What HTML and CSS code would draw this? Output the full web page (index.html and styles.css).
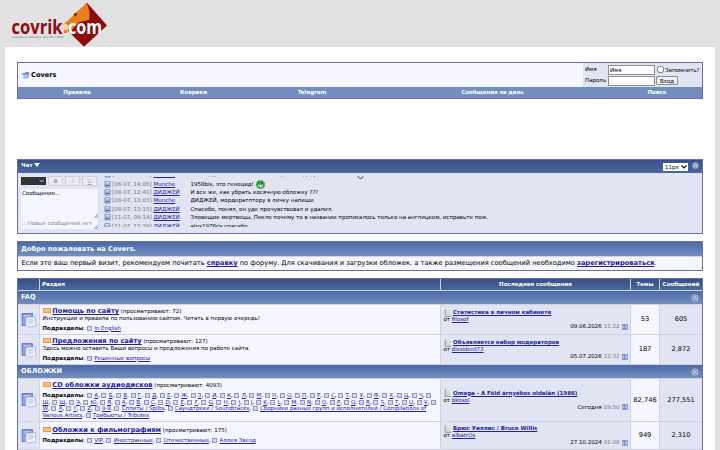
FILE: index.html
```
<!DOCTYPE html>
<html lang="ru">
  <head>
    <meta charset="UTF-8" />
    <title>Covers</title>
    <link rel="stylesheet" href="styles.css">
  </head>
  <body>
    <svg class="defs" width="0" height="0">
      <symbol id="forum" viewBox="0 0 16 16">
        <path d="M1 1.5h10.5v12H1z" fill="#7f93cc" stroke="#5f74b4" stroke-width=".8"/>
        <path d="M2.3 3.4h7.5M2.3 5h7" stroke="#cdd8f4" stroke-width=".8"/>
        <path d="M4.5 5.5l9.5-1 1 9.5-8 1.2-2.5-2z" fill="#eef2fc" stroke="#8c9ccc" stroke-width=".6"/>
        <path d="M7 7.5l5-.5M7 9.3l5.5-.5M7 11.2l5-.5" stroke="#9aa9d0" stroke-width=".6"/>
        <path d="M1.500 6.500h4l-.5 6.500H1.500z" fill="#93a6dc"/>
      </symbol>
      <symbol id="post" viewBox="0 0 8 8">
        <path d="M1.2.5v6.8h6" fill="none" stroke="#777b80" stroke-width=".8"/>
        <path d="M2.6 1.8h2M2.6 3.2h2.8M2.6 4.6h2.4M3 6h4" stroke="#b9c2ac" stroke-width=".6"/>
      </symbol>
      <symbol id="go" viewBox="0 0 6 6">
        <rect x=".3" y=".3" width="5.4" height="5.4" fill="#b9c9ea" stroke="#7088bd" stroke-width=".6"/>
        <path d="M1.2 1.4h2.4L2.5 3l1.3 1.7H1.4" fill="none" stroke="#4664a6" stroke-width=".7"/>
      </symbol>
      <symbol id="collapse" viewBox="0 0 8 8">
        <circle cx="4" cy="4" r="3.3" fill="#7790c2" stroke="#c6d3ea" stroke-width=".7"/>
        <path d="M2.3 4L4 2.5 5.7 4M2.3 5.7L4 4.2l1.7 1.5" fill="none" stroke="#fff" stroke-width=".7"/>
      </symbol>
      <symbol id="msg" viewBox="0 0 7 7">
        <rect x=".8" y=".4" width="5.4" height="5.8" rx=".6" fill="#a8b9de" stroke="#6a80b5" stroke-width=".6"/>
        <path d="M1.4 4.4h4.2" stroke="#4c649f" stroke-width="1"/>
        <path d="M1.8 1.8h3.4" stroke="#eef2fc" stroke-width=".9"/>
      </symbol>
    </svg>

    <header class="logo">
      <svg width="120" height="47" viewBox="0 0 120 47">
        <path d="M87 2.8L107 25.5 84 46.8 63 26z" fill="#8e0b0d"/>
        <path d="M86.500 3.200L63 25l8 6 8-9 10-2q2-9-2.500-16.800z" fill="#e8811d"/>
        <path d="M73.500 14l3-1.500.500 2.500-2 1.500z" fill="#8e0b0d"/>
        <circle cx="65" cy="27.500" r="3.500" fill="#f6d3b0"/>
        <circle cx="65.500" cy="31.500" r="1.800" fill="#e8811d"/>
        <text x="11.500" y="34" class="logo-name" textLength="51" lengthAdjust="spacingAndGlyphs">covrik</text>
        <text x="68" y="34" class="logo-name light" textLength="34" lengthAdjust="spacingAndGlyphs">com</text>
        <text x="12" y="38.300" class="logo-sub" textLength="51">миллионы обложек для CD и DVD</text>
      </svg>
    </header>

    <main class="page">
      <section class="tborder top">
        <div class="navbar">
          <div class="crumb">
            <svg width="9" height="8" viewBox="0 0 9 8"><path d="M.5 2h3l1-1h3.500v5.500h-6z" fill="#6f8ad8"/><path d="M1.500 3.500H9L7.500 7.500H2z" fill="#a9bdf2"/><path d="M.5 1.500l2 5" stroke="#e3eafc"/></svg>
            <b>Covers</b>
          </div>
          <form class="login">
            <label>Имя</label><input class="field" type="text" value="Имя"><span class="remember"><input type="checkbox">Запомнить?</span>
            <label>Пароль</label><input class="field" type="password"><button class="enter" type="button">Вход</button>
          </form>
        </div>
        <nav class="menu">
          <a>Правила</a><a>Коврики</a><a>Telegram</a><a>Сообщения за день</a><a>Поиск</a>
        </nav>
      </section>

      <section class="tborder chat">
        <div class="thead chat-head">
          <span>Чат <i class="down"></i></span>
          <div class="tools">
            <span class="size">11px <svg width="6" height="4" viewBox="0 0 6 4"><path d="M.5.5l2.500 2.500L5.500.5" fill="none" stroke="#111" stroke-width="1.200"/></svg></span>
            <svg width="7" height="7"><use href="#collapse"/></svg>
          </div>
        </div>
        <div class="chat-body">
          <div class="editor">
            <div class="buttons">
              <span class="color"><svg width="5" height="4" viewBox="0 0 5 4"><path d="M.5.8l2 2 2-2" fill="none" stroke="#ddd"/></svg></span>
              <span class="btn"><b>B</b></span><span class="btn"><i>I</i></span><span class="btn"><u>U</u></span>
            </div>
            <div class="message">Сообщение...<i class="grip"></i></div>
            <div class="status">:: Новых сообщений нет<i class="grip"></i></div>
          </div>
          <div class="log">
            <div class="line tall"><svg width="7" height="7"><use href="#msg"/></svg><span class="when">[06-07, 13:58]</span><a>Munche</a><p>Пекло, для чего всё это было здесь надо, расскажи мне <i class="smile"></i></p></div>
            <div class="line"><svg width="7" height="7"><use href="#msg"/></svg><span class="when">[06-07, 14:06]</span><a>Munche</a><p>1958bis, это геноцид! <svg class="grin" width="9" height="9" viewBox="0 0 9 9"><circle cx="4.500" cy="4.500" r="4.100" fill="#3fb54d" stroke="#207a2c" stroke-width=".5"/><circle cx="3" cy="2.900" r=".7"/><circle cx="6" cy="2.900" r=".7"/><path d="M2 4.400h5v2q-2.500 2-5 0z" fill="#fff" stroke="#176022" stroke-width=".4"/><path d="M3.600 4.500v2.500M5.300 4.500v2.500" stroke="#176022" stroke-width=".4"/></svg></p></div>
            <div class="line"><svg width="7" height="7"><use href="#msg"/></svg><span class="when">[08-07, 12:41]</span><a>ДИДЖЕЙ</a><p>И все же, как убрать косячную обложку ???</p></div>
            <div class="line"><svg width="7" height="7"><use href="#msg"/></svg><span class="when">[08-07, 13:03]</span><a>Munche</a><p>ДИДЖЕЙ, мордератптору в личку напиши</p></div>
            <div class="line"><svg width="7" height="7"><use href="#msg"/></svg><span class="when">[08-07, 13:15]</span><a>ДИДЖЕЙ</a><p>Спасибо, понял, он уде прочувствовал и удалил.</p></div>
            <div class="line"><svg width="7" height="7"><use href="#msg"/></svg><span class="when">[11-07, 09:14]</span><a>ДИДЖЕЙ</a><p>Зловещие мертвецы, Пекло почему то в названии прописалось только на англицком, исправьте пож.</p></div>
            <div class="line"><svg width="7" height="7"><use href="#msg"/></svg><span class="when">[11-07, 15:39]</span><a>ДИДЖЕЙ</a><p>alex1976ris спасибо</p></div>
          </div>
        </div>
      </section>

      <section class="tborder welcome">
        <div class="tcat">Добро пожаловать на Covers.</div>
        <p>Если это ваш первый визит, рекомендуем почитать <a><b>справку</b></a> по форуму. Для скачивания и загрузки обложек, а также размещения сообщений необходимо <a><b>зарегистрироваться</b></a>.</p>
      </section>

      <section class="tborder forums">
        <div class="row head">
          <div class="thead"></div><div class="thead left">Раздел</div><div class="thead">Последнее сообщение</div><div class="thead">Темы</div><div class="thead">Сообщений</div>
        </div>

        <div class="tcat">FAQ <svg width="8" height="8"><use href="#collapse"/></svg></div>
        <div class="row faq">
          <div class="alt2 icon"><svg width="16" height="16"><use href="#forum"/></svg></div>
          <div class="alt1 forum">
            <div class="title"><i class="flag"></i> <a>Помощь по сайту</a> <span>(просматривают: 72)</span></div>
            <div class="desc">Инструкции и правила по пользованию сайтом. Читать в первую очередь!</div>
            <div class="subs"><b>Подразделы</b>: <i class="sub"></i> <a>In English</a></div>
          </div>
          <div class="alt2 last">
            <div class="topic"><svg width="8" height="8"><use href="#post"/></svg><a>Статистика в личном кабинете</a></div>
            <div>от <a>filosof</a></div>
            <div class="date">09.06.2026 <span>11:22</span> <svg width="6" height="6"><use href="#go"/></svg></div>
          </div>
          <div class="alt1 num">53</div>
          <div class="alt2 num">605</div>
        </div>
        <div class="row faq">
          <div class="alt2 icon"><svg width="16" height="16"><use href="#forum"/></svg></div>
          <div class="alt1 forum">
            <div class="title"><i class="flag"></i> <a>Предложения по сайту</a> <span>(просматривают: 127)</span></div>
            <div class="desc">Здесь можно оставить Ваши вопросы и предложения по работе сайта.</div>
            <div class="subs"><b>Подразделы</b>: <i class="sub"></i> <a>Решенные вопросы</a></div>
          </div>
          <div class="alt2 last">
            <div class="topic"><svg width="8" height="8"><use href="#post"/></svg><a>Объявляется набор модераторов</a></div>
            <div>от <a>dissident73</a></div>
            <div class="date">05.07.2026 <span>12:32</span> <svg width="6" height="6"><use href="#go"/></svg></div>
          </div>
          <div class="alt1 num">187</div>
          <div class="alt2 num">2,872</div>
        </div>

        <div class="tcat">ОБЛОЖКИ <svg width="8" height="8"><use href="#collapse"/></svg></div>
        <div class="row audio">
          <div class="alt2 icon"><svg width="16" height="16"><use href="#forum"/></svg></div>
          <div class="alt1 forum">
            <div class="title"><i class="flag"></i> <a>CD обложки аудиодисков</a> <span>(просматривают: 4093)</span></div>
            <div class="subs">
              <b>Подразделы</b>: <i class="sub"></i> <a>А</a>, <i class="sub"></i> <a>Б</a>, <i class="sub"></i> <a>В</a>, <i class="sub"></i> <a>Г</a>, <i class="sub"></i> <a>Д</a>, <i class="sub"></i> <a>Е</a>, <i class="sub"></i> <a>Ж</a>, <i class="sub"></i> <a>З</a>, <i class="sub"></i> <a>И</a>, <i class="sub"></i> <a>К</a>, <i class="sub"></i> <a>Л</a>, <i class="sub"></i> <a>М</a>, <i class="sub"></i> <a>Н</a>, <i class="sub"></i> <a>О</a>, <i class="sub"></i> <a>П</a>, <i class="sub"></i> <a>Р</a>, <i class="sub"></i> <a>С</a>, <i class="sub"></i> <a>Т</a>, <i class="sub"></i> <a>У</a>, <i class="sub"></i> <a>Ф</a>, <i class="sub"></i> <a>Х</a>, <i class="sub"></i> <a>Ц</a>, <i class="sub"></i> <a>Ч</a>, <i class="sub"></i><br>
              <a>Ш</a>, <i class="sub"></i> <a>Щ</a>, <i class="sub"></i> <a>Э</a>, <i class="sub"></i> <a>Ю</a>, <i class="sub"></i> <a>Я</a>, <i class="sub"></i> <a>A</a>, <i class="sub"></i> <a>B</a>, <i class="sub"></i> <a>C</a>, <i class="sub"></i> <a>D</a>, <i class="sub"></i> <a>E</a>, <i class="sub"></i> <a>F</a>, <i class="sub"></i> <a>G</a>, <i class="sub"></i> <a>H</a>, <i class="sub"></i> <a>I</a>, <i class="sub"></i> <a>J</a>, <i class="sub"></i> <a>K</a>, <i class="sub"></i> <a>L</a>, <i class="sub"></i> <a>M</a>, <i class="sub"></i> <a>N</a>, <i class="sub"></i> <a>O</a>, <i class="sub"></i> <a>P</a>, <i class="sub"></i> <a>Q</a>, <i class="sub"></i> <a>R</a>, <i class="sub"></i> <a>S</a>, <i class="sub"></i> <a>T</a>, <i class="sub"></i> <a>U</a>, <i class="sub"></i> <a>V</a>, <i class="sub"></i><br>
              <a>W</a>, <i class="sub"></i> <a>X</a>, <i class="sub"></i> <a>Y</a>, <i class="sub"></i> <a>Z</a>, <i class="sub"></i> <a>0-9</a>, <i class="sub"></i> <a>Сплиты / Splits</a>, <i class="sub"></i> <a>Саундтреки / Soundtracks</a>, <i class="sub"></i> <a>Сборники разных групп и исполнителей / Compilations of<br>
              Various Artists</a>, <i class="sub"></i> <a>Трибьюты / Tributes</a>
            </div>
          </div>
          <div class="alt2 last">
            <div class="topic"><svg width="8" height="8"><use href="#post"/></svg><a>Omega - A Föld árnyékos oldalán (1986)</a></div>
            <div>от <a>bkosol</a></div>
            <div class="date">Сегодня <span>09:50</span> <svg width="6" height="6"><use href="#go"/></svg></div>
          </div>
          <div class="alt1 num">82,746</div>
          <div class="alt2 num">277,551</div>
        </div>
        <div class="row films">
          <div class="alt2 icon"><svg width="16" height="16"><use href="#forum"/></svg></div>
          <div class="alt1 forum">
            <div class="title"><i class="flag"></i> <a>Обложки к фильмографиям</a> <span>(просматривают: 175)</span></div>
            <div class="subs"><b>Подразделы</b>: <i class="sub"></i> <a>VIP</a>, <i class="sub"></i> <a>Иностранные</a>, <i class="sub"></i> <a>Отечественные</a>, <i class="sub"></i> <a>Аллея Звезд</a></div>
          </div>
          <div class="alt2 last">
            <div class="topic"><svg width="8" height="8"><use href="#post"/></svg><a>Брюс Уиллис / Bruce Willis</a></div>
            <div>от <a>albatrOs</a></div>
            <div class="date">27.10.2024 <span>01:08</span> <svg width="6" height="6"><use href="#go"/></svg></div>
          </div>
          <div class="alt1 num">949</div>
          <div class="alt2 num">2,310</div>
        </div>
        <div class="row">
          <div class="alt2 icon"></div><div class="alt1"></div><div class="alt2"></div><div class="alt1"></div><div class="alt2"></div>
        </div>
      </section>
    </main>
  </body>
</html>
```

FILE: styles.css
```
* {
  box-sizing: border-box;
}

body {
  margin: 0;
  height: 450px;
  overflow: hidden;
  background: #e1e1e2;
  font-family: "DejaVu Sans", sans-serif;
  font-size: 5.5px;
  line-height: 7px;
  color: #000;
}

p {
  margin: 0;
}

svg {
  display: block;
  flex: none;
}

.defs {
  position: absolute;
}

a {
  color: #22229c;
  text-decoration: underline;
  text-decoration-thickness: 0.6px;
}

.logo {
  height: 47px;
}
.logo-name {
  font: bold 19.5px "Open Sans", sans-serif;
  fill: #8e0b0d;
}
.logo-name.light {
  fill: #fff;
}
.logo-sub {
  font-size: 2.6px;
  fill: #666;
}

.page {
  width: 710px;
  height: 420px;
  margin-left: 5px;
  padding: 15px 12px 0;
  background: #fff;
}

.tborder {
  width: 686px;
  border: 1px solid #6c6ea6;
  background: #d1d1e1;
}

/* login bar */
.top {
  height: 37px;
}
.navbar {
  display: flex;
  height: 24px;
  background: #f5f5ff;
}
.crumb {
  display: flex;
  flex: 1;
  align-items: center;
  gap: 1px;
  padding-left: 3px;
  font-size: 6.67px;
}
.login {
  display: grid;
  grid-template-columns: 23px 47px 1fr;
  grid-template-rows: 11px 11px;
  width: 119px;
  padding: 1px 0 0 2px;
  align-items: center;
  background: #e1e4f2;
}
.field {
  width: 47px;
  height: 10px;
  padding: 0 1px;
  border: 1px solid #8d8d96;
  background: #fff;
  font: 5.5px "DejaVu Sans", sans-serif;
}
.remember {
  display: flex;
  align-items: center;
  padding: 2px 0 0 2px;
}
.remember input {
  width: 7px;
  height: 7px;
  margin: 0 1px 3px 0;
}
.enter {
  width: 22px;
  height: 9px;
  margin-left: 1px;
  padding: 0;
  border: 1px solid #8d8d96;
  border-radius: 1px;
  background: #efefef;
  font: 5.5px "DejaVu Sans", sans-serif;
}
.menu {
  display: grid;
  grid-template-columns: 118px 115px 122px 239px 90px;
  height: 11px;
  line-height: 11px;
  background: #738fbf;
  text-align: center;
}
.menu a {
  color: #fff;
  font-weight: bold;
  text-decoration: none;
}

/* chat */
.thead {
  background: linear-gradient(#374f86, #4c699b);
  color: #fff;
  font-weight: bold;
  text-align: center;
}
.chat {
  height: 75px;
  margin-top: 60px;
}
.chat-head {
  display: flex;
  justify-content: space-between;
  height: 13px;
  padding: 1px 3px 0;
  line-height: 8px;
}
.down {
  display: inline-block;
  border: 3px solid transparent;
  border-top: 4px solid #fff;
  border-bottom: 0;
}
.tools {
  display: flex;
  gap: 4px;
}
.tools > svg {
  margin-top: 1px;
}
.size {
  display: flex;
  align-items: center;
  gap: 2px;
  width: 25px;
  height: 8px;
  margin-top: 2px;
  padding-left: 2px;
  background: #fff;
  color: #000;
  font-weight: normal;
  white-space: nowrap;
}
.chat-body {
  display: flex;
  height: 60px;
  padding: 3px 3px 0;
  background: #e1e4f2;
}
.editor {
  width: 78px;
  border-right: 1px solid #d6d9ea;
}
.buttons {
  display: flex;
  gap: 2px;
  height: 10px;
}
.color {
  display: flex;
  align-items: center;
  justify-content: flex-end;
  width: 25px;
  height: 8px;
  margin-top: 1px;
  padding-right: 2px;
  background: #333;
}
.btn {
  width: 15px;
  height: 10px;
  border: 1px solid #cfcfd6;
  background: #ebebef;
  color: #a5a5aa;
  line-height: 8px;
  text-align: center;
}
.message,
.status {
  position: relative;
  width: 77px;
  padding: 1px;
  background: #f5f5ff;
}
.message {
  height: 29px;
  margin-top: 3px;
}
.status {
  height: 11px;
  padding-top: 2px;
  color: #888;
  white-space: nowrap;
}
.grip {
  position: absolute;
  right: 0;
  bottom: 0;
  width: 4px;
  height: 4px;
  background: linear-gradient(135deg, transparent 45%, #999 45%, #999 55%, transparent 55%, transparent 75%, #999 75%, #999 85%, transparent 85%);
}
.log {
  flex: 1;
  height: 51px;
  padding-left: 5px;
  overflow: hidden;
}
.line {
  display: grid;
  grid-template-columns: 8px 41.5px 37px 1fr;
  align-items: center;
  height: 8.5px;
  white-space: nowrap;
}
.line.tall {
  height: 10.5px;
  margin-top: -7px;
}
.when {
  color: #777;
}
.line p {
  display: flex;
  align-items: center;
  gap: 2px;
}
.smile {
  width: 7px;
  height: 10px;
  border: 1px solid #555;
  border-radius: 50%;
}

/* forum tables */
.tcat {
  display: flex;
  align-items: center;
  justify-content: space-between;
  height: 13px;
  padding: 0 3px;
  background: linear-gradient(#4b69a8, #738fbf);
  color: #fff;
  font-size: 6.67px;
  font-weight: bold;
}
.welcome {
  height: 30px;
  margin-top: 7px;
}
.welcome .tcat {
  height: 14px;
}
.welcome p {
  height: 13px;
  margin-top: 1px;
  padding-left: 3.5px;
  background: #f5f5ff;
  font-size: 6.67px;
  line-height: 13px;
  white-space: nowrap;
}
.forums {
  display: grid;
  gap: 1px;
  margin-top: 7px;
}
.row {
  display: grid;
  grid-template-columns: 21px 400px 189px 28px 42px;
  gap: 1px;
  min-height: 11px;
}
.head {
  line-height: 11px;
}
.left {
  padding-left: 2px;
  text-align: left;
}
.alt1 {
  background: #f5f5ff;
}
.alt2 {
  background: #e1e4f2;
}
.faq {
  height: 29px;
}
.audio {
  height: 42px;
}
.films {
  height: 27px;
}
.icon {
  display: grid;
  place-content: center;
}
.forum {
  display: flex;
  flex-direction: column;
  padding: 3px 2.5px 0;
  white-space: nowrap;
}
.films .forum {
  padding-top: 5px;
}
.title {
  height: 7px;
  line-height: 7px;
}
.title a {
  font-size: 6.67px;
  font-weight: bold;
}
.flag {
  display: inline-block;
  width: 8px;
  height: 5px;
  margin-bottom: 1px;
  border: 1px solid #f09a45;
  background: #fbbd78;
  vertical-align: middle;
}
.desc {
  line-height: 7px;
}
.desc + .subs {
  margin-top: 2.5px;
}
.title + .subs {
  margin-top: 3px;
  line-height: 6.5px;
}
.sub {
  display: inline-block;
  width: 5px;
  height: 5px;
  margin-right: 0.5px;
  border: 1px solid #8b98c4;
  background: #d3daee;
  vertical-align: -1px;
}
.last {
  display: flex;
  flex-direction: column;
  justify-content: center;
  padding: 0 2.5px;
}
.topic {
  display: flex;
  align-items: center;
  gap: 1.5px;
  height: 7px;
  font-weight: bold;
}
.date {
  display: flex;
  justify-content: flex-end;
  align-items: center;
  gap: 2px;
}
.date span {
  color: #777;
}
.num {
  display: grid;
  place-content: center;
  font-size: 6.67px;
}
```
